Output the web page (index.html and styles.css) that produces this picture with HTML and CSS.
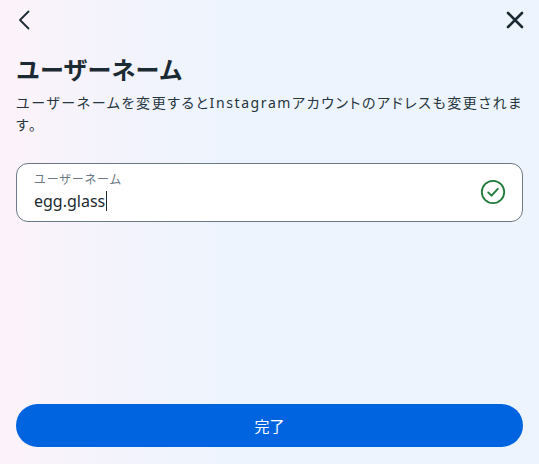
FILE: index.html
```
<!DOCTYPE html>
<html lang="ja">
<head>
  <meta charset="UTF-8">
  <title>ユーザーネーム</title>
  <link rel="stylesheet" href="styles.css">
</head>
<body>
  <div class="page">
    <div class="topbar">
      <button class="icon-btn back" aria-label="戻る">
        <svg width="12" height="20" viewBox="0 0 12 20">
          <path d="M10.5 1.5 L2 10 L10.5 18.5" fill="none" stroke="#1c2b33" stroke-width="1.8" stroke-linecap="round" stroke-linejoin="round"/>
        </svg>
      </button>
      <button class="icon-btn close" aria-label="閉じる">
        <svg width="18" height="18" viewBox="0 0 18 18">
          <path d="M2 2 L16 16 M16 2 L2 16" fill="none" stroke="#1c2b33" stroke-width="2.6" stroke-linecap="round"/>
        </svg>
      </button>
    </div>

    <h1 class="title">ユーザーネーム</h1>
    <p class="desc">ユーザーネームを変更するとInstagramアカウントのアドレスも変更されます。</p>

    <div class="field">
      <div class="field-text">
        <span class="field-label">ユーザーネーム</span>
        <span class="field-value">egg.glass<span class="caret"></span></span>
      </div>
      <svg class="check" width="26" height="26" viewBox="0 0 26 26">
        <circle cx="13" cy="13" r="11.2" fill="none" stroke="#1f7a3c" stroke-width="1.8"/>
        <path d="M8.2 13.4 L11.6 16.6 L17.8 9.8" fill="none" stroke="#1f7a3c" stroke-width="1.9" stroke-linecap="round" stroke-linejoin="round"/>
      </svg>
    </div>

    <button class="done">完了</button>
  </div>
</body>
</html>
```
FILE: styles.css
```
html, body {
  margin: 0;
  height: 100%;
}
body {
  font-family: "Noto Sans", "Noto Sans CJK JP", sans-serif;
  color: #1c2b33;
  background: linear-gradient(90deg, #fcf3f9 0%, #f3f3fc 22%, #eef4fd 40%, #eef4fd 100%);
}
.page {
  display: flex;
  flex-direction: column;
  height: 100vh;
  box-sizing: border-box;
  padding: 0 16px 17px;
}
.topbar {
  display: flex;
  justify-content: space-between;
  align-items: center;
  height: 40px;
}
.icon-btn {
  background: none;
  border: none;
  padding: 0;
  display: flex;
  cursor: pointer;
}
.back {
  margin-left: 2px;
}
.close {
  margin-right: -1px;
}
.title {
  margin: 14px 0 0;
  font-size: 24px;
  line-height: 32px;
  font-weight: 700;
}
.desc {
  margin: 6px 0 0;
  font-size: 14px;
  line-height: 22px;
  letter-spacing: 1.6px;
  font-feature-settings: "palt";
  color: #263640;
}
.field {
  margin-top: 27px;
  height: 59px;
  box-sizing: border-box;
  display: flex;
  align-items: center;
  justify-content: space-between;
  background: #fff;
  border: 1px solid #6b7886;
  border-radius: 12px;
  padding: 0 16px 0 17px;
}
.field-text {
  display: flex;
  flex-direction: column;
  margin-top: -2px;
}
.field-label {
  font-size: 12px;
  line-height: 17px;
  letter-spacing: 1px;
  color: #6b7884;
  font-feature-settings: "palt";
}
.field-value {
  font-size: 16px;
  line-height: 22px;
  margin-top: 2px;
}
.caret {
  display: inline-block;
  width: 1px;
  height: 20px;
  background: #1c2b33;
  vertical-align: -4px;
  margin-left: 1px;
}
.check {
  margin-top: -2px;
}
.done {
  margin-top: auto;
  height: 43px;
  border: none;
  border-radius: 22px;
  background: #0064e0;
  color: #fff;
  font-family: inherit;
  font-size: 15px;
}
```
